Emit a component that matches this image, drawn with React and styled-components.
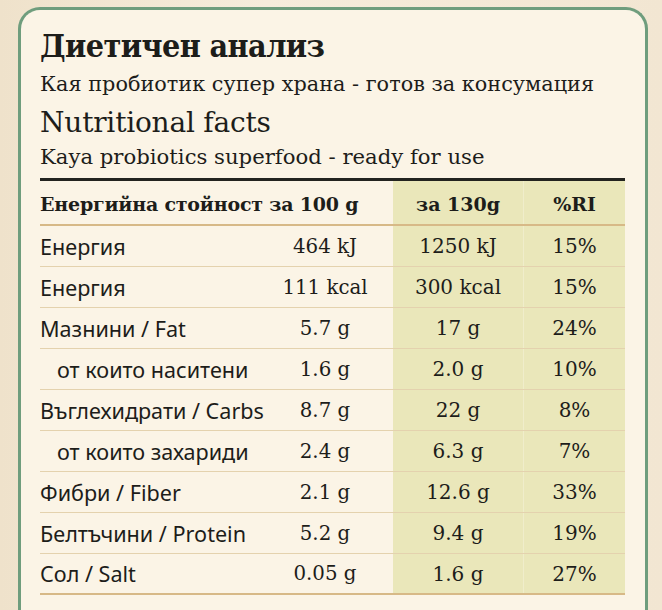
import React from "react";
import styled, { createGlobalStyle } from "styled-components";

const GlobalStyle = createGlobalStyle`
  html, body { margin: 0; padding: 0; }
  body {
    background: linear-gradient(90deg, #efe2cb 0%, #f6ecdb 40%, #f2e6d2 100%);
    color: #1d1d1a;
    min-height: 610px;
  }
`;

const Card = styled.div`
  margin: 7px 14px 0 18px;
  border: 3px solid #6f9d7d;
  border-bottom: none;
  border-radius: 22px 22px 0 0;
  background: #fbf4e6;
  padding: 18px 20px 20px 19px;
  min-height: 600px;
  box-sizing: border-box;
`;

const Title = styled.h1`
  margin: 0;
  font-family: "DejaVu Serif Condensed", "DejaVu Serif", serif;
  font-stretch: condensed;
  font-weight: 700;
  font-size: 32px;
  line-height: 36px;
  letter-spacing: -0.6px;
`;

const Subtitle = styled.p`
  margin: ${(p) => p.$mt}px 0 0;
  font-family: "DejaVu Serif", serif;
  font-size: ${(p) => p.$size}px;
  line-height: 26px;
`;

const Heading = styled.h2`
  margin: 9px 0 0;
  font-family: "DejaVu Serif", serif;
  font-weight: 400;
  font-size: 28px;
  line-height: 34px;
  letter-spacing: -0.2px;
`;

const Rule = styled.div`
  margin-top: 8px;
  border-top: 3px solid #23231f;
`;

const Row = styled.div`
  display: grid;
  grid-template-columns: 1fr 116px 130px 102px;
  height: ${(p) => (p.$header ? 45 : 41)}px;
  box-sizing: border-box;
  border-bottom: ${(p) => (p.$strong ? "2px solid #d7b987" : "1px solid #e4d2ae")};
`;

const HeadCell = styled.div`
  grid-column: span 2;
  display: flex;
  align-items: center;
  padding-top: 3px;
  font-family: "DejaVu Serif", serif;
  font-weight: 700;
  font-size: 19px;
  letter-spacing: -0.2px;
`;

const Label = styled.div`
  display: flex;
  align-items: center;
  padding-left: ${(p) => (p.$indent ? 17 : 0)}px;
  font-family: "Noto Sans", "Open Sans", sans-serif;
  font-size: 21.6px;
  white-space: nowrap;
`;

const Value = styled.div`
  display: flex;
  align-items: center;
  justify-content: center;
  padding-right: 20px;
  font-family: "DejaVu Serif", serif;
  font-size: 19.8px;
  white-space: nowrap;
`;

const Hi = styled.div`
  display: flex;
  align-items: center;
  justify-content: center;
  padding-top: ${(p) => (p.$bold ? 3 : 0)}px;
  background: #eae7ba;
  border-left: ${(p) => (p.$divider ? "1px solid #f0edcb" : "none")};
  font-family: "DejaVu Serif", serif;
  font-weight: ${(p) => (p.$bold ? 700 : 400)};
  font-size: ${(p) => (p.$bold ? 19 : 20)}px;
  white-space: nowrap;
`;

const rows = [
  ["Енергия", "464 kJ", "1250 kJ", "15%"],
  ["Енергия", "111 kcal", "300 kcal", "15%"],
  ["Мазнини / Fat", "5.7 g", "17 g", "24%"],
  ["от които наситени", "1.6 g", "2.0 g", "10%", true],
  ["Въглехидрати / Carbs", "8.7 g", "22 g", "8%"],
  ["от които захариди", "2.4 g", "6.3 g", "7%", true],
  ["Фибри / Fiber", "2.1 g", "12.6 g", "33%"],
  ["Белтъчини / Protein", "5.2 g", "9.4 g", "19%"],
  ["Сол / Salt", "0.05 g", "1.6 g", "27%"],
];

export default function App() {
  return (
    <>
      <GlobalStyle />
      <Card>
        <Title>Диетичен анализ</Title>
        <Subtitle $mt={7} $size={20.8}>Кая пробиотик супер храна - готов за консумация</Subtitle>
        <Heading>Nutritional facts</Heading>
        <Subtitle $mt={4} $size={21.2}>Kaya probiotics superfood - ready for use</Subtitle>
        <Rule />
        <Row $header $strong>
          <HeadCell>Енергийна стойност за 100 g</HeadCell>
          <Hi $bold>за 130g</Hi>
          <Hi $bold $divider>%RI</Hi>
        </Row>
        {rows.map(([label, v1, v2, ri, indent], i) => (
          <Row key={i} $strong={i === rows.length - 1}>
            <Label $indent={indent}>{label}</Label>
            <Value>{v1}</Value>
            <Hi>{v2}</Hi>
            <Hi $divider>{ri}</Hi>
          </Row>
        ))}
      </Card>
    </>
  );
}
